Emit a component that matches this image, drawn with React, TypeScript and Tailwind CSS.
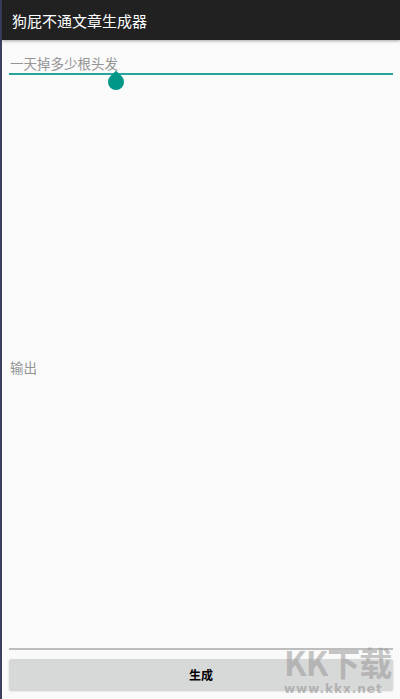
export default function App() {
  const font = { fontFamily: '"Noto Sans CJK SC", "Noto Sans", sans-serif' };

  return (
    <div className="relative flex h-[699px] w-[400px] bg-[#fafafa]" style={font}>
      <div className="w-[2px] shrink-0 bg-[#3b4060]" />
      <div className="flex flex-1 flex-col">
        <div className="flex h-[40px] shrink-0 items-center bg-[#212121] pl-[10px] shadow-[0_1px_3px_rgba(0,0,0,0.35)]">
          <span className="text-[15px] leading-none text-white">狗屁不通文章生成器</span>
        </div>

        <div className="flex flex-1 flex-col px-[7px]">
          <div className="relative mt-[12px]">
            <div className="h-[21px] pl-[1px] text-[13.5px] leading-[22px] text-[#959595]">
              一天掉多少根头发
            </div>
            <div className="h-[2px] bg-[#26a69a]" />
            <div className="absolute left-[99px] top-[22px] h-[16px] w-[16px] rotate-45 rounded-full rounded-tl-none bg-[#009688]" />
          </div>

          <div className="flex flex-1 items-center pl-[1px] pt-[12px]">
            <span className="text-[13.5px] text-[#959595]">输出</span>
          </div>

          <div className="h-[2px] bg-[#bdbdbd]" />
          <button className="mb-[9px] mt-[9px] flex h-[31px] items-center justify-center rounded-[2px] bg-[#d7d8d8] text-[12px] font-bold text-black shadow-[0_1px_2px_rgba(0,0,0,0.2)]">
            生成
          </button>
        </div>
      </div>

      <div className="pointer-events-none absolute left-[284px] top-[645px] flex flex-col items-start">
        <span className="text-[33px] font-bold leading-[34px] tracking-[-1px] text-[rgba(150,150,150,0.55)]">
          KK下载
        </span>
        <span
          className="mt-[4px] text-[12px] font-bold leading-[13px] tracking-[1px] text-[rgba(150,150,150,0.6)]"
          style={{ fontFamily: '"DejaVu Sans", sans-serif' }}
        >
          www.kkx.net
        </span>
      </div>
    </div>
  );
}
